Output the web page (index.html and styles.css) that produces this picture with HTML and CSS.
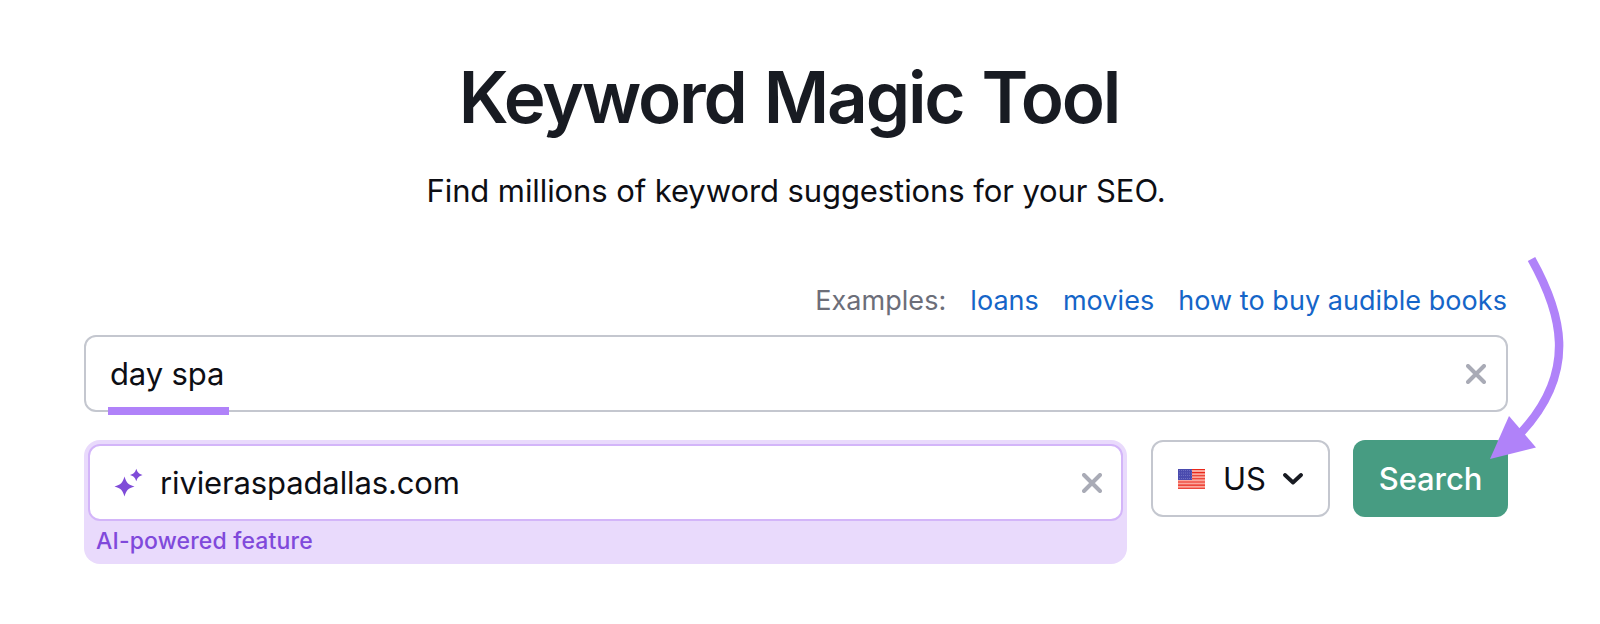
FILE: index.html
```
<!DOCTYPE html>
<html lang="en">
<head>
    <meta charset="UTF-8">
    <meta name="viewport" content="width=device-width, initial-scale=1.0">
    <title>Keyword Magic Tool</title>
    <link rel="stylesheet" href="styles.css">
</head>
<body>

<main class="page">
    <h1 class="title">Keyword Magic Tool</h1>
    <p class="subtitle">Find millions of keyword suggestions for your SEO.</p>

    <div class="examples">
        <span class="examples-label">Examples:</span>
        <a class="example" href="#">loans</a>
        <a class="example" href="#">movies</a>
        <a class="example" href="#">how to buy audible books</a>
    </div>

    <div class="field keyword-field">
        <span class="field-text">day spa</span>
        <svg class="clear" viewBox="0 0 20 20"><path d="M2 2 18 18M18 2 2 18"/></svg>
        <div class="underline"></div>
    </div>

    <div class="row">
        <div class="ai-box">
            <div class="field ai-field">
                <svg class="sparkles" viewBox="0 0 28 28">
                    <path d="M9.5 7.5C11.5 14 13 15.500 19.500 17.500 13 19.500 11.500 21 9.500 27.500 7.500 21 6 19.500-.5 17.500 6 15.500 7.500 14 9.500 7.500Z"/>
                    <path d="M21.300-.3C22.600 3.600 23.700 4.700 27.600 6 23.700 7.300 22.600 8.400 21.300 12.300 20 8.400 18.900 7.300 15 6 18.900 4.700 20 3.600 21.300-.3Z"/>
                </svg>
                <span class="field-text">rivieraspadallas.com</span>
                <svg class="clear" viewBox="0 0 20 20"><path d="M2 2 18 18M18 2 2 18"/></svg>
            </div>
            <div class="ai-label">AI-powered feature</div>
        </div>

        <div class="field country">
            <svg class="flag" viewBox="0 0 27 20">
                <rect width="27" height="20" fill="#fba79c"/>
                <path class="stripes" d="M0 .5H27M0 3.6H27M0 6.7H27M0 9.8H27M0 13H27M0 16.1H27M0 19.3H27"/>
                <rect width="14" height="11" fill="#4a4bae"/>
                <path class="stars" d="M1 1.5H14M1 4H14M1 6.5H14M1 9.5H14"/>
            </svg>
            <span class="country-code">US</span>
            <svg class="chevron" viewBox="0 0 20 12"><path d="M2 2 10 9.5 18 2"/></svg>
        </div>

        <button class="search">Search</button>
    </div>

    <svg class="arrow" viewBox="0 0 80 210">
        <path class="arrow-line" d="M45.5 9C74 60 95 121 32 186"/>
        <path class="arrow-head" d="M4 209 23 166 50 197.5Z"/>
    </svg>
</main>

</body>
</html>
```
FILE: styles.css
```
body {
    margin: 0;
    background-color: #fff;
    color: #0d0e14;
    font-family: Inter, "Liberation Sans", sans-serif;
}

.page {
    position: relative;
    box-sizing: border-box;
    width: 1600px;
    height: 624px;
    padding: 52px 92px 0 84px;
    overflow: hidden;
}

.title {
    margin: 0 0 0 -14px;
    color: #181b22;
    font-size: 71px;
    font-weight: 600;
    line-height: 90px;
    letter-spacing: -2.2px;
    word-spacing: 2.5px;
    text-align: center;
    white-space: nowrap;
}

.subtitle {
    margin: 29px 0 0;
    font-size: 31px;
    line-height: 40px;
    letter-spacing: -.09px;
    text-align: center;
    white-space: nowrap;
}

.examples {
    display: flex;
    justify-content: flex-end;
    gap: 24px;
    margin-top: 72px;
    padding-right: 1px;
    height: 36px;
    color: #6c6e79;
    font-size: 27px;
    line-height: 36px;
    letter-spacing: .05px;
    white-space: nowrap;
}

.example {
    color: #1565c8;
    text-decoration: none;
}

.field {
    display: flex;
    align-items: center;
    box-sizing: border-box;
    height: 77px;
    border: 2px solid #c4c7cf;
    border-radius: 12px;
    background-color: #fff;
    font-size: 31px;
    letter-spacing: -.13px;
    white-space: nowrap;
}

.keyword-field {
    position: relative;
    margin-top: 16px;
    padding: 0 20px 0 24px;
}

.clear {
    width: 20px;
    height: 20px;
    margin-left: auto;
    fill: none;
    stroke: #a9abb6;
    stroke-width: 4;
    stroke-linecap: round;
}

/* marker drawn over the bottom border */
.underline {
    position: absolute;
    left: 22px;
    bottom: -5px;
    width: 121px;
    height: 8px;
    background-color: #b082f9;
}

.row {
    display: flex;
    align-items: flex-start;
    margin-top: 28px;
}

.ai-box {
    box-sizing: border-box;
    width: 1043px;
    height: 124px;
    padding: 4px;
    border-radius: 16px;
    background-color: #e9dafc;
}

.ai-field {
    padding: 0 19px 0 25px;
    border-color: #d3b5f9;
}

.sparkles {
    width: 28px;
    height: 28px;
    margin: 0 17px 0 0;
    fill: #7f4bd8;
    overflow: visible;
}

.ai-label {
    padding: 5px 8px;
    color: #8049db;
    font-size: 23px;
    font-weight: 500;
    line-height: 30px;
    letter-spacing: .16px;
}

.country {
    width: 179px;
    margin-left: 24px;
    padding: 0 25px;
}

.flag {
    width: 27px;
    height: 20px;
    margin-right: 18px;
}

.stripes {
    stroke: #e9281b;
    stroke-width: 1.1;
}

.stars {
    fill: none;
    stroke: #7778c6;
    stroke-width: .8;
    stroke-dasharray: 1 1;
}

.chevron {
    width: 20px;
    height: 12px;
    margin-left: auto;
    fill: none;
    stroke: #181b22;
    stroke-width: 3.8;
    stroke-linecap: round;
    stroke-linejoin: round;
}

.search {
    width: 155px;
    height: 77px;
    margin-left: 23px;
    padding: 0;
    border: none;
    border-radius: 12px;
    background-color: #479c82;
    color: #fff;
    font-family: inherit;
    font-size: 31px;
    font-weight: 500;
    letter-spacing: -.1px;
}

/* annotation lies over the form */
.arrow {
    position: absolute;
    left: 1486px;
    top: 250px;
    width: 80px;
    height: 210px;
}

.arrow-line {
    fill: none;
    stroke: #b082f9;
    stroke-width: 8.5;
}

.arrow-head {
    fill: #b082f9;
}
```
